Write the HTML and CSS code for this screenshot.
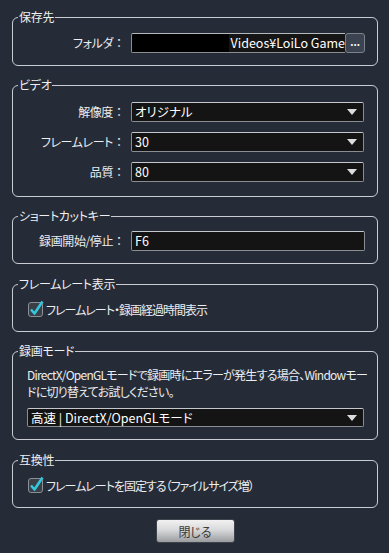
FILE: index.html
```html
<!DOCTYPE html>
<html lang="ja">

<head>
    <meta charset="UTF-8">
    <title>設定</title>
    <link rel="stylesheet" href="styles.css">
</head>

<body>
    <div class="dialog">
        <fieldset class="group group-save">
            <legend>保存先</legend>
            <div class="form-grid">
                <label class="row-label">フォルダ<span class="colon">：</span></label>
                <div class="path-field">
                    <div class="path-box"><span class="path-text">Videos¥LoiLo Game</span></div>
                    <button class="browse-btn">...</button>
                </div>
            </div>
        </fieldset>

        <fieldset class="group group-video">
            <legend>ビデオ</legend>
            <div class="form-grid">
                <label class="row-label">解像度<span class="colon">：</span></label>
                <div class="select"><span class="select-value">オリジナル</span><span class="arrow"></span></div>
                <label class="row-label">フレームレート<span class="colon">：</span></label>
                <div class="select"><span class="select-value">30</span><span class="arrow"></span></div>
                <label class="row-label">品質<span class="colon">：</span></label>
                <div class="select"><span class="select-value">80</span><span class="arrow"></span></div>
            </div>
        </fieldset>

        <fieldset class="group group-shortcut">
            <legend>ショートカットキー</legend>
            <div class="form-grid">
                <label class="row-label">録画開始/停止<span class="colon">：</span></label>
                <div class="text-field">F6</div>
            </div>
        </fieldset>

        <fieldset class="group group-check">
            <legend>フレームレート表示</legend>
            <label class="check-row">
                <svg class="check" width="18" height="18" viewBox="0 0 18 18">
                    <rect x="1.5" y="3.5" width="14" height="14" rx="2.5" fill="#3a3f47" stroke="#8c9096" stroke-width="1"/>
                    <path d="M4 10.5 L7.5 14.5 L15.5 2.5" fill="none" stroke="#33c6dc" stroke-width="2.6" stroke-linejoin="round"/>
                </svg>
                <span>フレームレート・録画経過時間表示</span>
            </label>
        </fieldset>

        <fieldset class="group group-mode">
            <legend>録画モード</legend>
            <p class="note">DirectX/OpenGLモードで録画時にエラーが発生する場合、Windowモードに切り替えてお試しください。</p>
            <div class="select select-wide"><span class="select-value">高速 | DirectX/OpenGLモード</span><span class="arrow"></span></div>
        </fieldset>

        <fieldset class="group group-check">
            <legend>互換性</legend>
            <label class="check-row">
                <svg class="check" width="18" height="18" viewBox="0 0 18 18">
                    <rect x="1.5" y="3.5" width="14" height="14" rx="2.5" fill="#3a3f47" stroke="#8c9096" stroke-width="1"/>
                    <path d="M4 10.5 L7.5 14.5 L15.5 2.5" fill="none" stroke="#33c6dc" stroke-width="2.6" stroke-linejoin="round"/>
                </svg>
                <span>フレームレートを固定する（ファイルサイズ増）</span>
            </label>
        </fieldset>

        <div class="footer">
            <button class="close-btn">閉じる</button>
        </div>
    </div>
</body>

</html>
```

FILE: styles.css
```css
* {
    margin: 0;
    padding: 0;
    box-sizing: border-box;
}

body {
    background: #262c37;
    color: #ebedf0;
    font-family: "Noto Sans CJK JP", sans-serif;
    font-size: 12px;
    font-feature-settings: "palt";
    height: 100vh;
    overflow: hidden;
}

.dialog {
    padding: 9px 11px 0 12px;
}

.group {
    border: 1px solid #c9cdd3;
    border-radius: 6px;
    padding: 8px 12px 12px 14px;
    margin-top: 11px;
    min-width: 0;
}

.group:first-child {
    margin-top: 0;
}

.group legend {
    font-size: 12px;
    line-height: 16px;
    padding: 0 1px;
    margin-left: -9px;
    color: #eef0f2;
    letter-spacing: -0.3px;
}

.group-video {
    padding-top: 9px;
    padding-bottom: 14px;
}

.group-shortcut {
    padding-top: 7px;
}

.group-check {
    margin-top: 12px;
    padding-bottom: 13px;
}

.group-mode {
    padding-top: 7px;
}

/* label column + field column */
.form-grid {
    display: grid;
    grid-template-columns: 98px 1fr;
    column-gap: 6px;
    row-gap: 10px;
    align-items: center;
}

.row-label {
    text-align: right;
    white-space: nowrap;
    line-height: 20px;
    letter-spacing: -0.4px;
}

.colon {
    font-feature-settings: normal;
    letter-spacing: 0;
}

.path-field {
    display: flex;
    height: 20px;
}

.path-box {
    flex: 1;
    display: flex;
    justify-content: flex-end;
    background: #000;
    border: 1px solid #8a8d92;
    border-top-color: #b5b8bc;
    border-right: none;
    border-radius: 2px 0 0 2px;
    overflow: hidden;
}

.path-text {
    background: #151515;
    color: #fff;
    padding-left: 2px;
    font-size: 12.5px;
    line-height: 18px;
    white-space: nowrap;
}

.browse-btn {
    width: 20px;
    height: 20px;
    background: #3c4350;
    border: 1px solid #7d838c;
    border-radius: 3px;
    color: #fff;
    font-family: inherit;
    font-size: 10px;
    font-weight: bold;
    line-height: 14px;
    padding-bottom: 2px;
}

.text-field,
.select {
    height: 20px;
    background: #141414;
    border: 1px solid #8a8d92;
    border-top-color: #c4c7cb;
    border-radius: 2px;
    color: #fff;
    line-height: 18px;
    padding-left: 3px;
    font-size: 12.5px;
}

.select {
    display: flex;
    align-items: center;
    justify-content: space-between;
    padding-right: 6px;
    margin-right: 1px;
}

.arrow {
    width: 0;
    height: 0;
    border-left: 5px solid transparent;
    border-right: 5px solid transparent;
    border-top: 6px solid #dcdcdc;
}

.select-wide {
    height: 19px;
    margin-top: 8px;
}

.check-row {
    display: flex;
    align-items: center;
    height: 18px;
    letter-spacing: -1px;
}

.check {
    display: block;
    margin-top: -3px;
    margin-right: 1px;
}

.note {
    line-height: 17px;
    letter-spacing: -0.75px;
    margin-right: -5px;
    line-break: strict;
}

.footer {
    display: flex;
    justify-content: center;
    padding-top: 11px;
}

.close-btn {
    width: 79px;
    height: 24px;
    border: 1px solid #3e434b;
    border-radius: 3px;
    background: linear-gradient(#f2f2f2, #d8d9da 45%, #9a9c9f);
    color: #3a3a3a;
    font-family: inherit;
    font-size: 12px;
    font-feature-settings: "palt";
}
```
